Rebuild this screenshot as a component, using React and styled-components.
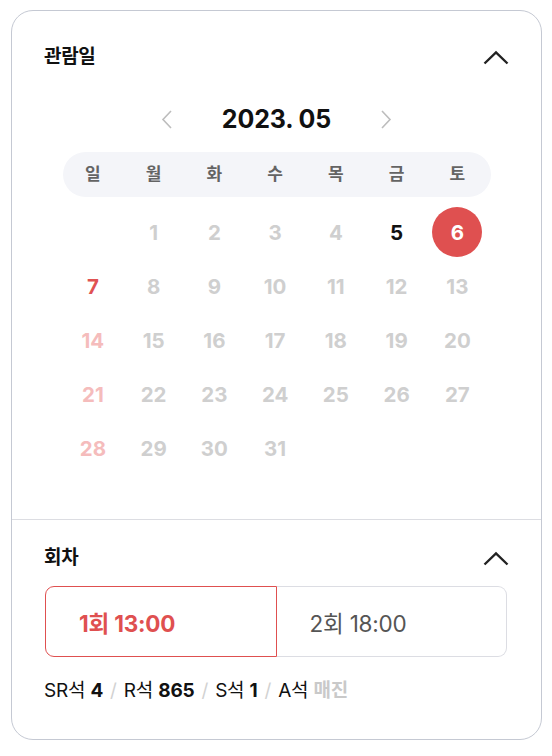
import styled, { createGlobalStyle } from 'styled-components'

const GlobalCSS = createGlobalStyle`
  * {
    margin: 0;
    padding: 0;
    box-sizing: border-box;
  }
  body {
    background: #ffffff;
    font-family: Inter, 'Noto Sans CJK KR', sans-serif;
    color: #111111;
  }
`

const Card = styled.div`
  margin: 10px 0 0 11px;
  width: 531px;
  border: 1px solid #c5c9d3;
  border-radius: 22px;
  background: #ffffff;
  overflow: hidden;
`

const Section = styled.section`
  padding: ${(p) => p.$pad};
  border-top: ${(p) => (p.$divided ? '1px solid #dcdde2' : 'none')};
`

const TitleRow = styled.div`
  display: flex;
  align-items: center;
  justify-content: space-between;
  height: 28px;
`

const Title = styled.h2`
  font-size: 19px;
  font-weight: 700;
  line-height: 28px;
  color: #111111;
  letter-spacing: -0.3px;
`

const Calendar = styled.div`
  width: 428px;
  margin: 32px auto 0;
`

const MonthNav = styled.div`
  display: flex;
  align-items: center;
  justify-content: center;
  height: 32px;
  gap: 50px;
`

const Month = styled.div`
  font-size: 25px;
  font-weight: 700;
  letter-spacing: -0.1px;
  color: #111111;
`

const WeekBar = styled.div`
  margin-top: 17px;
  height: 45px;
  border-radius: 23px;
  background: #f4f5f9;
`

const Grid = styled.div`
  display: grid;
  grid-template-columns: repeat(7, 60.75px);
  align-items: center;
`

const WeekDay = styled.div`
  text-align: center;
  font-size: 17px;
  font-weight: 700;
  color: #646464;
  line-height: 45px;
`

const Days = styled(Grid)`
  margin-top: 8px;
  grid-auto-rows: 54px;
`

const dayColor = {
  past: '#cfcfcf',
  today: '#111111',
  sunday: '#e05252',
  sundayPast: '#f5bcbc',
  selected: '#ffffff',
}

const Day = styled.div`
  justify-self: center;
  width: 50px;
  height: 50px;
  border-radius: 50%;
  display: flex;
  align-items: center;
  justify-content: center;
  font-size: 20.5px;
  font-weight: 700;
  color: ${(p) => dayColor[p.$kind]};
  background: ${(p) => (p.$kind === 'selected' ? '#df5050' : 'transparent')};
`

const Sessions = styled.div`
  display: flex;
  margin: 14px 2px 0 1px;
`

const Session = styled.button`
  flex: 1;
  height: 71px;
  padding-left: 33px;
  text-align: left;
  background: #ffffff;
  font-family: inherit;
  font-size: 22.5px;
  letter-spacing: -0.2px;
  font-weight: ${(p) => (p.$active ? 700 : 400)};
  color: ${(p) => (p.$active ? '#df5050' : '#555555')};
  border: 1px solid ${(p) => (p.$active ? '#df5050' : '#dcdde3')};
  border-left: ${(p) => (p.$active ? '1px solid #df5050' : 'none')};
  border-radius: ${(p) => (p.$active ? '9px 0 0 9px' : '0 9px 9px 0')};
`

const SeatInfo = styled.p`
  margin-top: 22px;
  font-size: 19px;
  line-height: 24px;
  color: #111111;
  letter-spacing: -0.2px;

  b {
    font-weight: 700;
  }
  .sep {
    color: #d2d2d2;
    margin: 0 7px;
  }
  .soldout {
    color: #c9c9c9;
    font-weight: 700;
  }
`

function ChevronUp() {
  return (
    <svg width="26" height="15" viewBox="0 0 26 15" fill="none">
      <path d="M1.5 13.5 L13 2.5 L24.5 13.5" stroke="#222" strokeWidth="2.4" />
    </svg>
  )
}

function Arrow({ dir }) {
  const d = dir === 'left' ? 'M10 1 L2 9.5 L10 18' : 'M1 1 L9 9.5 L1 18'
  return (
    <svg width="11" height="19" viewBox="0 0 11 19" fill="none">
      <path d={d} stroke="#bdbdbd" strokeWidth="1.6" />
    </svg>
  )
}

const weekdays = ['일', '월', '화', '수', '목', '금', '토']

const buildDays = () => {
  const cells = [null]
  for (let d = 1; d <= 31; d++) cells.push(d)
  return cells
}

const kindOf = (day, col) => {
  if (day === 6) return 'selected'
  if (day === 5) return 'today'
  if (day === 7) return 'sunday'
  if (col === 0) return 'sundayPast'
  return 'past'
}

function App() {
  const days = buildDays()

  return (
    <>
      <GlobalCSS />
      <Card>
        <Section $pad="32px 32px 44px">
          <TitleRow>
            <Title>관람일</Title>
            <ChevronUp />
          </TitleRow>

          <Calendar>
            <MonthNav>
              <Arrow dir="left" />
              <Month>2023. 05</Month>
              <Arrow dir="right" />
            </MonthNav>

            <WeekBar>
              <Grid>
                {weekdays.map((w) => (
                  <WeekDay key={w}>{w}</WeekDay>
                ))}
              </Grid>
            </WeekBar>

            <Days>
              {days.map((day, i) =>
                day === null ? (
                  <div key={'e' + i} />
                ) : (
                  <Day key={day} $kind={kindOf(day, i % 7)}>
                    {day}
                  </Day>
                )
              )}
            </Days>
          </Calendar>
        </Section>

        <Section $divided $pad="24px 32px 36px">
          <TitleRow>
            <Title>회차</Title>
            <ChevronUp />
          </TitleRow>

          <Sessions>
            <Session $active>1회 13:00</Session>
            <Session>2회 18:00</Session>
          </Sessions>

          <SeatInfo>
            SR석 <b>4</b>
            <span className="sep">/</span>R석 <b>865</b>
            <span className="sep">/</span>S석 <b>1</b>
            <span className="sep">/</span>A석 <span className="soldout">매진</span>
          </SeatInfo>
        </Section>
      </Card>
    </>
  )
}

export default App
